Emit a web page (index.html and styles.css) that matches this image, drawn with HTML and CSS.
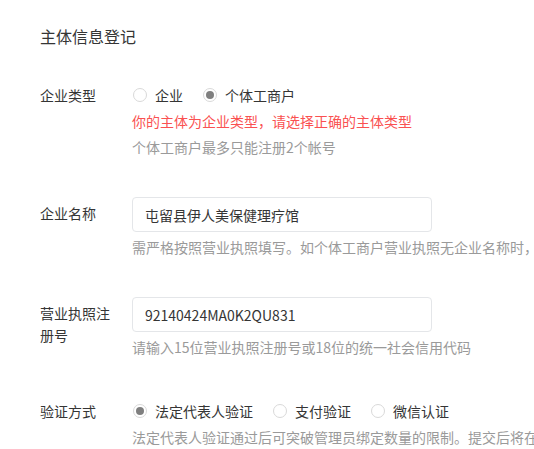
FILE: index.html
```html
<!DOCTYPE html>
<html lang="zh-CN">
<head>
    <meta charset="UTF-8">
    <meta name="viewport" content="width=device-width, initial-scale=1.0">
    <title>主体信息登记</title>
    <link rel="stylesheet" href="styles.css">
</head>
<body>

    <div class="page">
        <h2 class="title">主体信息登记</h2>

        <div class="row">
            <div class="label">企业类型</div>
            <div class="field">
                <div class="radios">
                    <label class="radio"><span class="circle"></span>企业</label>
                    <label class="radio checked"><span class="circle"></span>个体工商户</label>
                </div>
                <p class="error">你的主体为企业类型，请选择正确的主体类型</p>
                <p class="tip">个体工商户最多只能注册2个帐号</p>
            </div>
        </div>

        <div class="row">
            <div class="label label-input">企业名称</div>
            <div class="field">
                <input class="text-input" type="text" value="屯留县伊人美保健理疗馆">
                <p class="tip tip-input">需严格按照营业执照填写。如个体工商户营业执照无企业名称时，请以“个体户+经营者姓名”的格式进行填写</p>
            </div>
        </div>

        <div class="row">
            <div class="label label-input">营业执照注册号</div>
            <div class="field">
                <input class="text-input" type="text" value="92140424MA0K2QU831">
                <p class="tip tip-input">请输入15位营业执照注册号或18位的统一社会信用代码</p>
            </div>
        </div>

        <div class="row row-last">
            <div class="label">验证方式</div>
            <div class="field">
                <div class="radios">
                    <label class="radio checked"><span class="circle"></span>法定代表人验证</label>
                    <label class="radio"><span class="circle"></span>支付验证</label>
                    <label class="radio"><span class="circle"></span>微信认证</label>
                </div>
                <p class="tip">法定代表人验证通过后可突破管理员绑定数量的限制。提交后将在下一步进行验证</p>
            </div>
        </div>
    </div>

</body>
</html>
```

FILE: styles.css
```css
/* Strona rejestracji podmiotu */
body {
    margin: 0;
    background-color: #fff;
    color: #353535;
    font-family: "Noto Sans CJK SC", "Noto Sans", sans-serif;
    font-size: 14px;
    overflow: hidden;
}

.page {
    padding: 24px 0 0 40px;
}

.title {
    margin: 0;
    font-size: 16px;
    font-weight: normal;
    line-height: 24px;
}

.row {
    display: flex;
    margin-top: 38px;
}

.row:first-of-type {
    margin-top: 35px;
}

.row-last {
    margin-top: 40px;
}

.label {
    width: 80px;
    margin-right: 12px;
    flex-shrink: 0;
    line-height: 24px;
}

.label-input {
    line-height: 22px;
    padding-top: 5px;
}

.field {
    flex: 1;
    min-width: 0;
}

.radios {
    display: flex;
    line-height: 24px;
}

.radio {
    display: flex;
    align-items: center;
    margin-right: 19px;
    cursor: pointer;
}

.circle {
    width: 12px;
    height: 12px;
    margin: 0 8px 0 1px;
    border: 1px solid #d9d9d9;
    border-radius: 50%;
    display: flex;
    align-items: center;
    justify-content: center;
    box-sizing: content-box;
}

.checked .circle::after {
    content: "";
    width: 8px;
    height: 8px;
    border-radius: 50%;
    background-color: #7f7f7f;
}

.error,
.tip {
    margin: 2px 0 0;
    line-height: 24px;
    white-space: nowrap;
}

.error {
    color: #fa5151;
}

.tip {
    color: #9a9a9a;
}

.tip-input {
    margin-top: 3px;
}

.text-input {
    display: block;
    width: 300px;
    height: 35px;
    box-sizing: border-box;
    padding: 0 12px;
    border: 1px solid #e4e6e9;
    border-radius: 4px;
    font-family: inherit;
    font-size: 14px;
    color: #353535;
    outline: none;
}
```
